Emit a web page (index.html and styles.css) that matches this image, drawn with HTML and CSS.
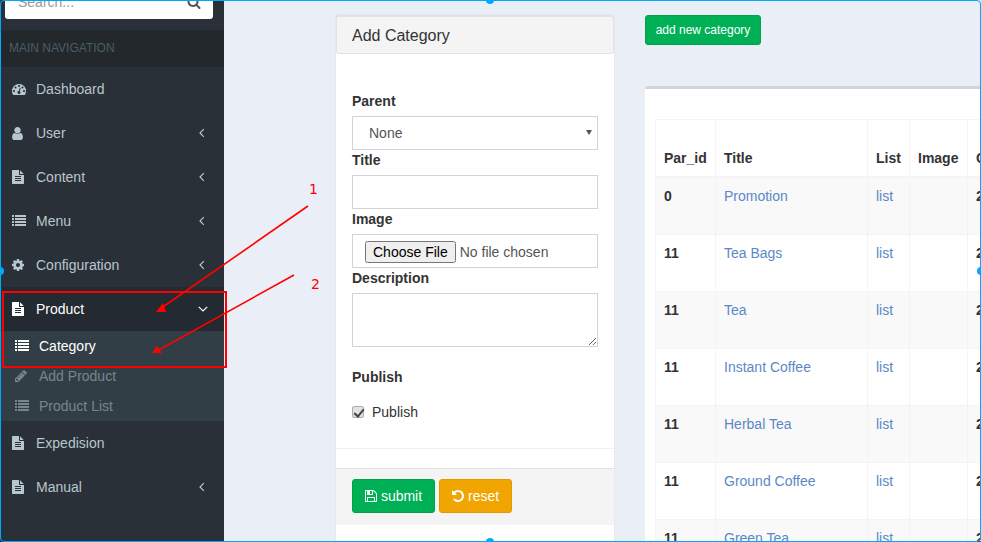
FILE: index.html
```html
<!DOCTYPE html>
<html lang="en">
<head>
    <meta charset="UTF-8">
    <meta name="viewport" content="width=device-width, initial-scale=1.0">
    <title>Category</title>
    <link rel="stylesheet" href="styles.css">
</head>
<body>
    <svg class="icon-defs" xmlns="http://www.w3.org/2000/svg">
        <symbol id="i-search" viewBox="0 0 1792 1792"><path d="M1216 832q0-185-131.5-316.5t-316.5-131.5-316.5 131.5-131.5 316.5 131.5 316.5 316.5 131.5 316.5-131.5 131.5-316.5zm512 832q0 52-38 90t-90 38q-54 0-90-38l-343-342q-179 124-399 124-143 0-273.5-55.5t-225-150-150-225-55.5-273.5 55.5-273.5 150-225 225-150 273.5-55.5 273.5 55.5 225 150 150 225 55.5 273.5q0 220-124 399l343 343q37 37 37 90z"/></symbol>
        <symbol id="i-dashboard" viewBox="0 0 1792 1792"><path d="M384 1152q0-53-37.5-90.5t-90.5-37.5-90.5 37.5-37.5 90.5 37.5 90.5 90.5 37.5 90.5-37.5 37.5-90.5zm192-448q0-53-37.5-90.5t-90.5-37.5-90.5 37.5-37.5 90.5 37.5 90.5 90.5 37.5 90.5-37.5 37.5-90.5zm428 481l101-382q6-26-7.5-48.5t-38.5-29.5-48 6.5-30 39.5l-101 382q-60 5-107 43.5t-63 98.5q-20 77 20 146t117 89 146-20 89-117q16-60-6-117t-72-91zm660-33q0-53-37.5-90.5t-90.5-37.5-90.5 37.5-37.5 90.5 37.5 90.5 90.5 37.5 90.5-37.5 37.5-90.5zm-640-640q0-53-37.5-90.5t-90.5-37.5-90.5 37.5-37.5 90.5 37.5 90.5 90.5 37.5 90.5-37.5 37.5-90.5zm448 192q0-53-37.5-90.5t-90.5-37.5-90.5 37.5-37.5 90.5 37.5 90.5 90.5 37.5 90.5-37.5 37.5-90.5zm320 448q0 261-141 483-19 29-54 29h-1402q-35 0-54-29-141-221-141-483 0-182 71-348t191-286 286-191 348-71 348 71 286 191 191 286 71 348z"/></symbol>
        <symbol id="i-user" viewBox="0 0 1792 1792"><path d="M1536 1399q0 109-62.5 187t-150.5 78h-854q-88 0-150.5-78t-62.5-187q0-85 8.5-160.5t31.5-152 58.5-131 94-89 134.5-34.5q131 128 313 128t313-128q76 0 134.5 34.5t94 89 58.5 131 31.5 152 8.5 160.5zm-256-887q0 159-112.5 271.5t-271.5 112.5-271.5-112.5-112.5-271.5 112.5-271.5 271.5-112.5 271.5 112.5 112.5 271.5z"/></symbol>
        <symbol id="i-file" viewBox="0 0 1792 1792"><path d="M1596 476q14 14 28 36h-472v-472q22 14 36 28zm-476 164h544v1056q0 40-28 68t-68 28h-1344q-40 0-68-28t-28-68v-1600q0-40 28-68t68-28h800v544q0 40 28 68t68 28zm160 736v-64q0-14-9-23t-23-9h-704q-14 0-23 9t-9 23v64q0 14 9 23t23 9h704q14 0 23-9t9-23zm0-256v-64q0-14-9-23t-23-9h-704q-14 0-23 9t-9 23v64q0 14 9 23t23 9h704q14 0 23-9t9-23zm0-256v-64q0-14-9-23t-23-9h-704q-14 0-23 9t-9 23v64q0 14 9 23t23 9h704q14 0 23-9t9-23z"/></symbol>
        <symbol id="i-list" viewBox="0 0 1792 1792"><path d="M256 1312v192q0 14-9 23t-23 9h-192q-14 0-23-9t-9-23v-192q0-14 9-23t23-9h192q14 0 23 9t9 23zm0-384v192q0 14-9 23t-23 9h-192q-14 0-23-9t-9-23v-192q0-14 9-23t23-9h192q14 0 23 9t9 23zm0-384v192q0 14-9 23t-23 9h-192q-14 0-23-9t-9-23v-192q0-14 9-23t23-9h192q14 0 23 9t9 23zm1536 768v192q0 14-9 23t-23 9h-1344q-14 0-23-9t-9-23v-192q0-14 9-23t23-9h1344q14 0 23 9t9 23zm-1536-1152v192q0 14-9 23t-23 9h-192q-14 0-23-9t-9-23v-192q0-14 9-23t23-9h192q14 0 23 9t9 23zm1536 768v192q0 14-9 23t-23 9h-1344q-14 0-23-9t-9-23v-192q0-14 9-23t23-9h1344q14 0 23 9t9 23zm0-384v192q0 14-9 23t-23 9h-1344q-14 0-23-9t-9-23v-192q0-14 9-23t23-9h1344q14 0 23 9t9 23zm0-384v192q0 14-9 23t-23 9h-1344q-14 0-23-9t-9-23v-192q0-14 9-23t23-9h1344q14 0 23 9t9 23z"/></symbol>
        <symbol id="i-cog" viewBox="0 0 1792 1792"><path d="M1152 896q0-106-75-181t-181-75-181 75-75 181 75 181 181 75 181-75 75-181zm512-109v222q0 12-8 23t-20 13l-185 28q-19 54-39 91 35 50 107 138 10 12 10 25t-9 23q-27 37-99 108t-94 71q-12 0-26-9l-138-108q-44 23-91 38-16 136-29 186-7 28-36 28h-222q-14 0-24.5-8.5t-11.5-21.5l-28-184q-49-16-90-37l-141 107q-10 9-25 9-14 0-25-11-126-114-165-168-7-10-7-23 0-12 8-23 15-21 51-66.5t54-70.5q-27-50-41-99l-183-27q-13-2-21-12.5t-8-23.5v-222q0-12 8-23t19-13l186-28q14-46 39-92-40-57-107-138-10-12-10-24 0-10 9-23 26-36 98.5-107.5t94.5-71.5q13 0 26 10l138 107q44-23 91-38 16-136 29-186 7-28 36-28h222q14 0 24.5 8.5t11.5 21.5l28 184q49 16 90 37l142-107q9-9 24-9 13 0 25 10 129 119 165 170 7 8 7 22 0 12-8 23-15 21-51 66.5t-54 70.5q26 50 41 98l183 28q13 2 21 12.5t8 23.5z"/></symbol>
        <symbol id="i-pencil" viewBox="0 0 1792 1792"><path d="M491 1536l91-91-235-235-91 91v107h128v128h107zm523-928q0-22-22-22-10 0-17 7l-542 542q-7 7-7 17 0 22 22 22 10 0 17-7l542-542q7-7 7-17zm-54-192l416 416-832 832h-416v-416zm683 96q0 53-37 90l-166 166-416-416 166-165q36-38 90-38 53 0 91 38l235 234q37 39 37 91z"/></symbol>
        <symbol id="i-save" viewBox="0 0 1792 1792"><path d="M512 1536h768v-384h-768v384zm896 0h128v-896q0-14-10-38.5t-20-34.5l-281-281q-10-10-34-20t-39-10v416q0 40-28 68t-68 28h-576q-40 0-68-28t-28-68v-416h-128v1280h128v-416q0-40 28-68t68-28h832q40 0 68 28t28 68v416zm-384-928v-320q0-13-9.5-22.5t-22.5-9.5h-192q-13 0-22.5 9.5t-9.5 22.5v320q0 13 9.5 22.5t22.5 9.5h192q13 0 22.5-9.5t9.5-22.5zm640 32v928q0 40-28 68t-68 28h-1344q-40 0-68-28t-28-68v-1344q0-40 28-68t68-28h928q40 0 88 20t76 48l280 280q28 28 48 76t20 88z"/></symbol>
        <symbol id="i-undo" viewBox="0 0 1792 1792"><path d="M1664 896q0 156-61 298t-164 245-245 164-298 61q-172 0-327-72.5t-264-204.5q-7-10-6.5-22.5t8.5-20.5l137-138q10-9 25-9 16 2 23 12 73 95 179 147t225 52q104 0 198.5-40.5t163.5-109.5 109.5-163.5 40.5-198.5-40.5-198.5-109.5-163.5-163.5-109.5-198.5-40.5q-98 0-188 35.5t-160 101.5l137 138q31 30 14 69-17 40-59 40h-448q-26 0-45-19t-19-45v-448q0-42 40-59 39-17 69 14l130 129q107-101 244.5-156.5t284.5-55.5q156 0 298 61t245 164 164 245 61 298z"/></symbol>
        <symbol id="i-left" viewBox="0 0 12 12"><path d="M6.8 2.2 3 6l3.8 3.8" fill="none" stroke="currentColor" stroke-width="1.2"/></symbol>
        <symbol id="i-down" viewBox="0 0 12 12"><path d="M1.8 3.8 6 8l4.2-4.2" fill="none" stroke="currentColor" stroke-width="1.2"/></symbol>
    </svg>

    <div class="screen">
        <aside class="sidebar">
            <div class="search-row">
                <div class="search-box">
                    <span>Search...</span>
                    <svg class="search-icon"><use href="#i-search"/></svg>
                </div>
            </div>
            <div class="nav-header">MAIN NAVIGATION</div>
            <ul class="nav">
                <li><a><svg class="nav-icon"><use href="#i-dashboard"/></svg><span>Dashboard</span></a></li>
                <li><a><svg class="nav-icon icon-user"><use href="#i-user"/></svg><span>User</span><svg class="caret"><use href="#i-left"/></svg></a></li>
                <li><a><svg class="nav-icon nudge"><use href="#i-file"/></svg><span>Content</span><svg class="caret"><use href="#i-left"/></svg></a></li>
                <li><a><svg class="nav-icon"><use href="#i-list"/></svg><span>Menu</span><svg class="caret"><use href="#i-left"/></svg></a></li>
                <li><a><svg class="nav-icon nudge"><use href="#i-cog"/></svg><span>Configuration</span><svg class="caret"><use href="#i-left"/></svg></a></li>
                <li class="open">
                    <a><svg class="nav-icon nudge"><use href="#i-file"/></svg><span>Product</span><svg class="caret"><use href="#i-down"/></svg></a>
                    <ul class="subnav">
                        <li class="current"><a><svg class="nav-icon"><use href="#i-list"/></svg><span>Category</span></a></li>
                        <li><a><svg class="nav-icon nudge"><use href="#i-pencil"/></svg><span>Add Product</span></a></li>
                        <li><a><svg class="nav-icon"><use href="#i-list"/></svg><span>Product List</span></a></li>
                    </ul>
                </li>
                <li><a><svg class="nav-icon nudge"><use href="#i-file"/></svg><span>Expedision</span></a></li>
                <li><a><svg class="nav-icon nudge"><use href="#i-file"/></svg><span>Manual</span><svg class="caret"><use href="#i-left"/></svg></a></li>
            </ul>
        </aside>

        <main class="content">
            <form class="form-col" action="#">
                <div class="form-head">Add Category</div>
                <div class="form-body">
                    <label for="parent">Parent</label>
                    <div class="select-wrap">
                        <select id="parent"><option>None</option></select>
                    </div>
                    <label for="title">Title</label>
                    <input type="text" id="title">
                    <label for="image">Image</label>
                    <input type="file" id="image">
                    <label for="desc">Description</label>
                    <textarea id="desc"></textarea>
                    <div class="publish-title">Publish</div>
                    <label class="check"><input type="checkbox" checked> Publish</label>
                </div>
                <div class="form-foot">
                    <button type="button" class="btn btn-green"><svg class="btn-icon"><use href="#i-save"/></svg> submit</button>
                    <button type="button" class="btn btn-orange"><svg class="btn-icon"><use href="#i-undo"/></svg> reset</button>
                </div>
            </form>

            <section class="list-col">
                <button type="button" class="btn btn-green btn-add">add new category</button>
                <div class="table-box">
                    <table>
                        <colgroup>
                            <col class="c-id"><col class="c-title"><col class="c-list"><col class="c-image"><col class="c-date">
                        </colgroup>
                        <thead>
                            <tr><th>Par_id</th><th>Title</th><th>List</th><th>Image</th><th>Created</th></tr>
                        </thead>
                        <tbody>
                            <tr><td class="strong">0</td><td><a>Promotion</a></td><td><a>list</a></td><td></td><td class="strong">2018</td></tr>
                            <tr><td class="strong">11</td><td><a>Tea Bags</a></td><td><a>list</a></td><td></td><td class="strong">2018</td></tr>
                            <tr><td class="strong">11</td><td><a>Tea</a></td><td><a>list</a></td><td></td><td class="strong">2018</td></tr>
                            <tr><td class="strong">11</td><td><a>Instant Coffee</a></td><td><a>list</a></td><td></td><td class="strong">2018</td></tr>
                            <tr><td class="strong">11</td><td><a>Herbal Tea</a></td><td><a>list</a></td><td></td><td class="strong">2018</td></tr>
                            <tr><td class="strong">11</td><td><a>Ground Coffee</a></td><td><a>list</a></td><td></td><td class="strong">2018</td></tr>
                            <tr><td class="strong">11</td><td><a>Green Tea</a></td><td><a>list</a></td><td></td><td class="strong">2018</td></tr>
                        </tbody>
                    </table>
                </div>
            </section>
        </main>

        <!-- annotation drawn over the screenshot -->
        <svg class="marks" width="981" height="542" xmlns="http://www.w3.org/2000/svg">
            <rect x="3" y="292" width="223" height="75" fill="none" stroke="#f00" stroke-width="2"/>
            <line x1="308" y1="206" x2="160" y2="309" stroke="#f00" stroke-width="1.6"/>
            <polygon points="156,312 163,303 166,312" fill="#f00"/>
            <line x1="294" y1="275" x2="157" y2="351" stroke="#f00" stroke-width="1.6"/>
            <polygon points="152,353 157,346 162,353" fill="#f00"/>
            <text x="309" y="194" class="mark-num">1</text>
            <text x="311" y="289" class="mark-num">2</text>
        </svg>

        <!-- selection frame and its handles -->
        <div class="frame">
            <i class="handle h-top"></i>
            <i class="handle h-left"></i>
            <i class="handle h-right"></i>
            <i class="handle h-bottom"></i>
        </div>
    </div>
</body>
</html>
```

FILE: styles.css
```css
* {
    box-sizing: border-box;
}

body {
    margin: 0;
    font-family: "Liberation Sans", Arial, sans-serif;
    font-size: 14px;
    line-height: 20px;
    color: #333;
}

.icon-defs {
    display: none;
}

.screen {
    position: relative;
    display: flex;
    width: 981px;
    height: 542px;
    overflow: hidden;
    background-color: #eaeef6;
}

/* sidebar */
.sidebar {
    flex: 0 0 224px;
    background-color: #293038;
}

.search-row {
    height: 30px;
    padding: 0 11px 11px 5px;
    display: flex;
    align-items: flex-end;
    overflow: hidden;
}

.search-box {
    flex: none;
    width: 208px;
    height: 34px;
    padding: 0 12px 0 13px;
    display: flex;
    align-items: center;
    justify-content: space-between;
    background-color: #fff;
    border-radius: 3px;
    color: #999;
}

.search-icon {
    width: 14px;
    height: 14px;
    fill: #555;
}

.nav-header {
    height: 37px;
    padding: 8px 9px;
    background-color: #22282c;
    color: #4b5c68;
    font-size: 12px;
}

.nav,
.subnav {
    margin: 0;
    padding: 0;
    list-style: none;
}

.nav a {
    display: flex;
    align-items: center;
    height: 44px;
    padding: 0 15px 0 12px;
    color: #b8c7ce;
}

.nav-icon {
    flex: none;
    width: 14px;
    height: 14px;
    margin-right: 10px;
    fill: currentColor;
}

/* these glyphs sit 1px in from the edge of their box */
.nudge {
    margin-left: -1px;
    margin-right: 11px;
}

.icon-user {
    width: 15px;
    height: 15px;
    margin-left: -2px;
    margin-right: 11px;
}

.caret {
    width: 12px;
    height: 12px;
    margin-left: auto;
    color: #b8c7ce;
}

.open > a {
    background-color: #232a31;
    color: #fff;
}

.open > a .caret {
    color: #fff;
}

.subnav {
    background-color: #323e46;
}

.subnav a {
    height: 30px;
    padding-left: 15px;
    color: #76868f;
}

.subnav .current a {
    color: #fff;
}

/* main area */
.content {
    flex: 1;
    display: flex;
    align-items: flex-start;
    gap: 31px;
    min-width: 0;
    padding: 15px 0 0 112px;
}

.form-col {
    flex: 0 0 278px;
    height: 560px;
    background-color: #fff;
    box-shadow: 0 0 1px rgba(0, 0, 0, 0.25);
    border-radius: 3px;
}

.form-head {
    height: 39px;
    padding: 9px 15px;
    font-size: 16px;
    background-color: #f4f4f4;
    border: 1px solid #e2e2e2;
    border-top-width: 2px;
    border-radius: 3px;
}

.form-body {
    height: 395px;
    padding: 37px 16px 0;
    border-bottom: 1px solid #f0f0f0;
}

.form-body label {
    display: block;
    font-weight: bold;
    margin-bottom: 5px;
}

.form-body select,
.form-body input[type="text"],
.form-body input[type="file"],
.form-body textarea {
    display: block;
    width: 100%;
    height: 34px;
    padding: 6px 12px;
    border: 1px solid #d2d2e0;
    border-radius: 0;
    background-color: #fff;
    font-family: inherit;
    font-size: 14px;
    color: #555;
}

.form-body select {
    padding-left: 16px;
    appearance: none;
}

.form-body textarea {
    height: 54px;
}

.select-wrap {
    position: relative;
}

.select-wrap::after {
    content: "";
    position: absolute;
    top: 14px;
    right: 6px;
    border-style: solid;
    border-width: 5px 3px 0;
    border-color: #555 transparent transparent;
}

.publish-title {
    margin-top: 20px;
    font-weight: bold;
}

.form-body .check {
    display: flex;
    align-items: center;
    margin: 15px 0 0;
    font-weight: normal;
}

.check input {
    position: relative;
    width: 12px;
    height: 12px;
    margin: 0 8px 0 0;
    appearance: none;
    background-color: #e2e2e2;
    border: 1px solid #adadad;
    border-radius: 2px;
}

.check input::before {
    content: "";
    position: absolute;
    top: 0;
    left: 3px;
    width: 4px;
    height: 8px;
    border: solid #444;
    border-width: 0 2px 2px 0;
    transform: rotate(40deg);
}

.form-foot {
    display: flex;
    gap: 4px;
    height: 57px;
    margin-top: 19px;
    padding: 10px 16px;
    background-color: #f4f4f4;
    border-top: 1px solid #e2e2e2;
}

.btn {
    height: 34px;
    padding: 0 12px;
    font-family: inherit;
    font-size: 14px;
    color: #fff;
    border-radius: 3px;
    border: 1px solid transparent;
    white-space: nowrap;
}

.btn-green {
    background-color: #00b057;
    border-color: #00a04f;
}

.btn-orange {
    background-color: #f0a500;
    border-color: #e09a00;
}

.btn-icon {
    width: 14px;
    height: 14px;
    margin: 0 -1px;
    fill: #fff;
    vertical-align: -2px;
}

.list-col {
    flex: 1;
    min-width: 0;
}

.btn-add {
    display: block;
    width: 116px;
    height: 30px;
    padding: 0;
    font-size: 12px;
}

.table-box {
    margin-top: 41px;
    padding: 30px 0 0 10px;
    height: 480px;
    background-color: #fff;
    border-top: 3px solid #d2d2e0;
    border-radius: 3px 0 0 0;
    overflow: hidden;
}

table {
    table-layout: fixed;
    width: 400px;
    border-collapse: collapse;
}

.c-id { width: 60px; }
.c-title { width: 152px; }
.c-list { width: 42px; }
.c-image { width: 58px; }
.c-date { width: 88px; }

th,
td {
    padding: 8px;
    border: 1px solid #f4f4f4;
    vertical-align: top;
    text-align: left;
    white-space: nowrap;
}

th {
    height: 57px;
    vertical-align: bottom;
    border-bottom-width: 2px;
}

td {
    height: 57px;
}

tbody tr:first-child td {
    height: 58px;
}

td.strong {
    font-weight: bold;
}

td a {
    color: #5b88c5;
}

tbody tr:nth-child(odd) {
    background-color: #f9f9f9;
}

/* overlays */
.marks {
    position: absolute;
    top: 0;
    left: 0;
}

.mark-num {
    font-family: "DejaVu Sans", sans-serif;
    font-size: 14px;
    fill: #f00;
}

.frame {
    position: absolute;
    inset: 0;
    border: 1px solid #00a8ff;
    border-radius: 4px;
    pointer-events: none;
}

.handle {
    position: absolute;
    width: 8px;
    height: 8px;
    border-radius: 50%;
    background-color: #00a8ff;
}

.h-top { top: -5px; left: 485px; }
.h-bottom { bottom: -5px; left: 485px; }
.h-left { left: -5px; top: 266px; }
.h-right { right: -5px; top: 266px; }
```
